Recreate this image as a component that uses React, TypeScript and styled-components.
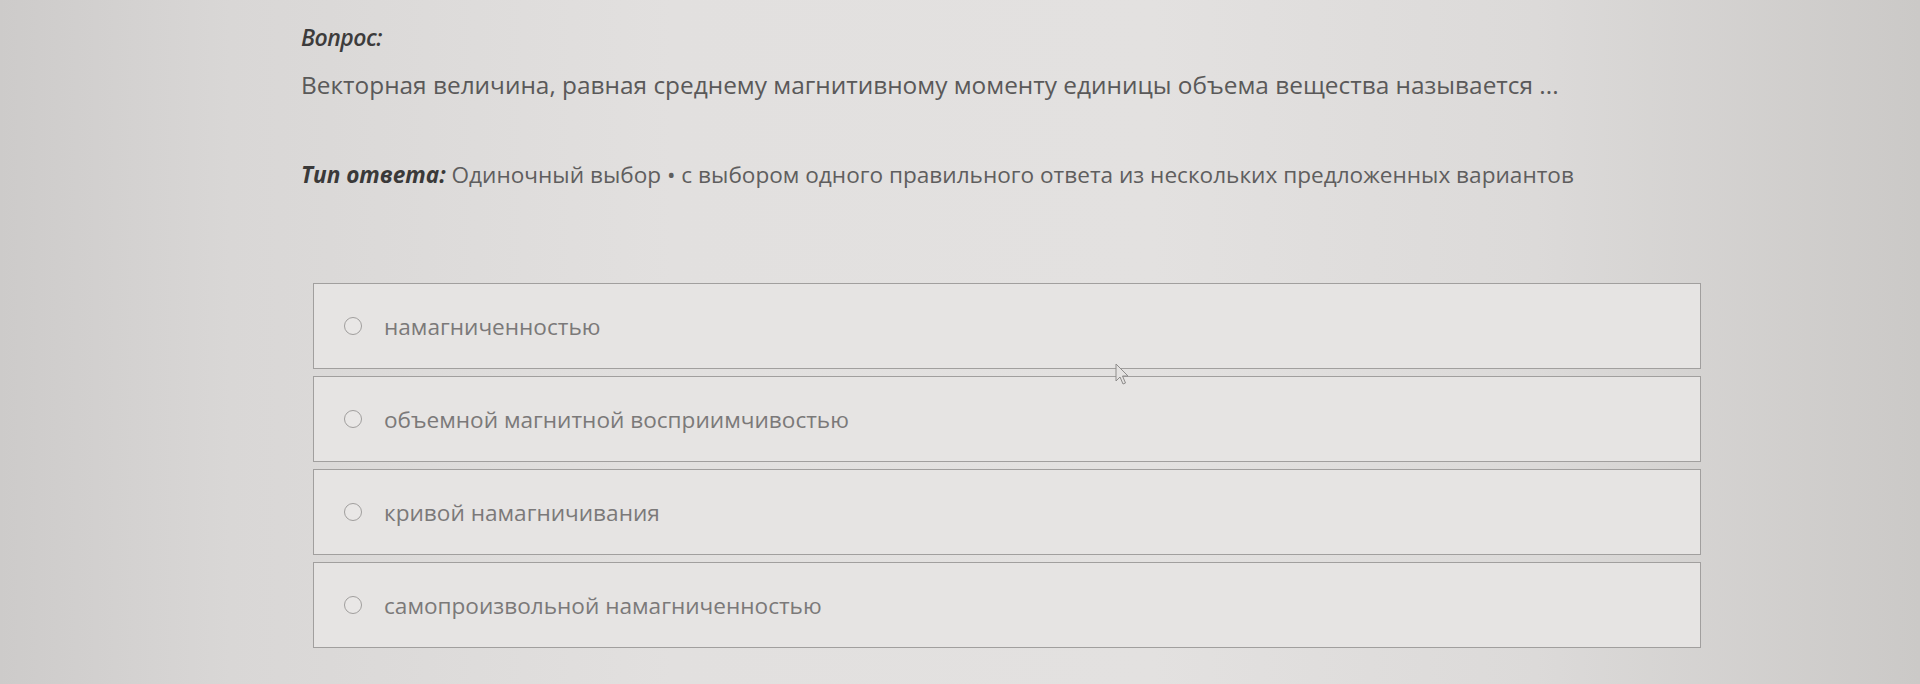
import React from "react";
import styled, { createGlobalStyle } from "styled-components";

const Global = createGlobalStyle`
  html, body { margin: 0; padding: 0; }
  body {
    width: 1920px;
    height: 684px;
    overflow: hidden;
    font-family: "Open Sans", "Noto Sans", sans-serif;
    background: linear-gradient(90deg, #cdcbca 0%, #d9d7d6 12%, #e2e0df 35%, #e3e1e0 60%, #dcdad9 80%, #cbc9c7 100%);
  }
`;

const Page = styled.div`
  position: relative;
  width: 1920px;
  height: 684px;
  box-sizing: border-box;
  padding: 22px 0 0 301px;
`;

const Label = styled.div`
  font-size: 23px;
  font-weight: 600;
  font-style: italic;
  color: #3d3c3c;
  letter-spacing: -0.5px;
  line-height: 30px;
`;

const Question = styled.div`
  margin-top: 18px;
  font-size: 24.4px;
  color: #5a5959;
  line-height: 30px;
`;

const TypeLine = styled.div`
  margin-top: 60px;
  font-size: 22.6px;
  color: #5f5e5e;
  line-height: 30px;
`;

const TypeLabel = styled.span`
  font-weight: 700;
  font-style: italic;
  color: #3a3939;
`;

const Options = styled.div`
  margin-top: 93px;
  margin-left: 12px;
  width: 1388px;
  display: flex;
  flex-direction: column;
  gap: 7px;
`;

const Option = styled.label`
  height: 86px;
  box-sizing: border-box;
  border: 1.5px solid #a19f9e;
  background: #e6e4e3;
  display: flex;
  align-items: center;
  padding-left: 30px;
  gap: 22px;
  font-size: 22.6px;
  color: #7b7979;
`;

const Radio = styled.span`
  width: 18px;
  height: 18px;
  box-sizing: border-box;
  border-radius: 50%;
  border: 1.5px solid #a09e9d;
  background: #e9e7e6;
  flex: none;
`;

const Cursor = styled.svg`
  position: absolute;
  left: 1115px;
  top: 363px;
`;

const options = [
  "намагниченностью",
  "объемной магнитной восприимчивостью",
  "кривой намагничивания",
  "самопроизвольной намагниченностью",
];

export default function App() {
  return (
    <>
      <Global />
      <Page>
        <Label>Вопрос:</Label>
        <Question>
          Векторная величина, равная среднему магнитивному моменту единицы объема вещества называется ...
        </Question>
        <TypeLine>
          <TypeLabel>Тип ответа:</TypeLabel> Одиночный выбор • с выбором одного правильного ответа из нескольких предложенных вариантов
        </TypeLine>
        <Options>
          {options.map((o) => (
            <Option key={o}>
              <Radio />
              {o}
            </Option>
          ))}
        </Options>
        <Cursor width="16" height="24" viewBox="0 0 16 24">
          <path
            d="M1 1 L1 18 L5 14 L8 21 L10.5 20 L7.5 13 L13 13 Z"
            fill="#e4e2e1"
            stroke="#8e8c8b"
            strokeWidth="1"
            strokeLinejoin="round"
          />
        </Cursor>
      </Page>
    </>
  );
}
